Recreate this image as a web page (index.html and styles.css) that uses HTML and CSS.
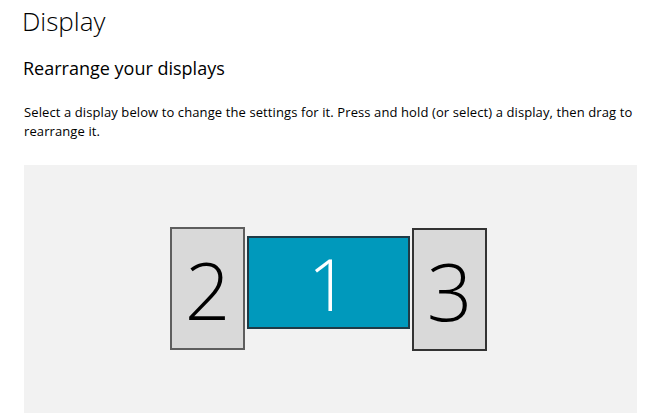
FILE: index.html
```html
<!DOCTYPE html>
<html lang="en">
<head>
    <meta charset="UTF-8">
    <meta name="viewport" content="width=device-width, initial-scale=1.0">
    <title>Display</title>
    <link rel="stylesheet" href="styles.css">
</head>
<body>
    <div class="page">
        <h1 class="page-title">Display</h1>
        <h2 class="section-title">Rearrange your displays</h2>
        <p class="section-text">Select a display below to change the settings for it. Press and hold (or select) a display, then drag to rearrange it.</p>

        <!-- Display arrangement canvas -->
        <div class="arrange">
            <div class="monitor monitor-side monitor-two">2</div>
            <div class="monitor monitor-main">1</div>
            <div class="monitor monitor-side monitor-three">3</div>
        </div>
    </div>
</body>
</html>
```

FILE: styles.css
```css
body {
    margin: 0;
    background: #fff;
    color: #000;
    font-family: "Open Sans", "Noto Sans", sans-serif;
}
.page {
    padding: 0 12px 0 24px;
}
.page-title {
    margin: 0;
    padding-top: 3px;
    margin-left: -2px;
    font-size: 26px;
    font-weight: 300;
    line-height: 36px;
}
.section-title {
    margin: 17px 0 0 -1px;
    font-size: 18px;
    font-weight: 400;
    line-height: 24px;
}
.section-text {
    margin: 23px 0 0 0;
    font-size: 13px;
    line-height: 19px;
    letter-spacing: 0.1px;
}
.arrange {
    position: relative;
    margin-top: 24px;
    width: 613px;
    height: 248px;
    background: #f2f2f2;
}
.monitor {
    position: absolute;
    box-sizing: border-box;
    display: flex;
    align-items: center;
    justify-content: center;
    font-weight: 300;
    line-height: 1;
}
.monitor-side {
    width: 75px;
    height: 123px;
    background: #d9d9d9;
    font-size: 80px;
    color: #000;
}
.monitor-two {
    left: 146px;
    top: 62px;
    border: 2px solid #5e5e5e;
}
.monitor-three {
    left: 388px;
    top: 63px;
    border: 2px solid #333;
}
.monitor-main {
    left: 223px;
    top: 71px;
    width: 163px;
    height: 93px;
    background: #0099bc;
    border: 2px solid #1f3b47;
    color: #fff;
    font-size: 72px;
}
```
